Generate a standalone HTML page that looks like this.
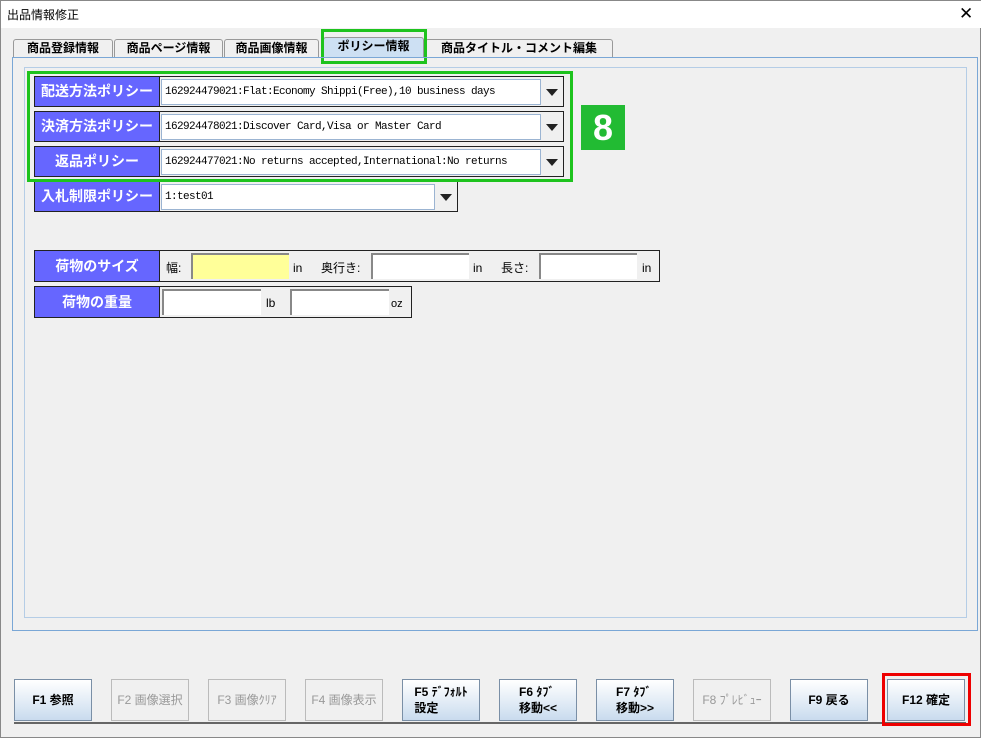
<!DOCTYPE html><html><head><meta charset="utf-8"><style>
*{box-sizing:border-box;margin:0;padding:0}
body{width:981px;height:738px;background:#f0f0f0;font-family:"Liberation Sans","Noto Sans CJK JP",sans-serif;position:relative;overflow:hidden;border:1px solid #888}
.a{position:absolute}
.title{left:0;top:0;width:981px;height:27px;background:#fff;font-size:12px;padding:5px 6px}
.tab{top:38px;height:19px;border:1px solid #999;border-bottom:none;background:#f0f0f0;font-size:12px;font-weight:bold;text-align:center;line-height:17px;border-radius:3px 3px 0 0}
.lbl{background:#6666ff;color:#fff;font-size:14px;font-weight:bold;text-align:center;border:1px solid #222;}
.row{border:1px solid #222;background:#f0f0f0}
.cb{background:#fff;border:1px solid #9bb4d2;font-family:"Liberation Mono","Noto Sans CJK JP",monospace;font-size:11px;padding-left:3px;line-height:24px;white-space:nowrap;overflow:hidden;letter-spacing:-0.6px}
.arr{width:0;height:0;border-left:6px solid transparent;border-right:6px solid transparent;border-top:7px solid #222}
.in{background:#fff;border-top:2px solid #888;border-left:2px solid #888}
.t{font-size:12px}
.btn{top:678px;height:42px;width:78px;border:1px solid #7a8fa6;background:linear-gradient(#fff,#dfeaf5 60%,#c9dbee);font-size:12px;font-weight:bold;display:flex;align-items:center;justify-content:center;text-align:left;line-height:16px}
.dis{background:#f0f0f0;border-color:#bbb;color:#999;font-weight:normal}
</style></head><body>
<div class="a title">出品情報修正</div>
<div class="a" style="left:958px;top:3px;font-size:17px">✕</div>
<div class="a tab" style="left:12px;width:100px">商品登録情報</div>
<div class="a tab" style="left:113px;width:109px">商品ページ情報</div>
<div class="a tab" style="left:223px;width:95px">商品画像情報</div>
<div class="a tab" style="left:322px;width:101px;background:#cde0f3;top:36px;height:21px">ポリシー情報</div>
<div class="a tab" style="left:424px;width:188px">商品タイトル・コメント編集</div>
<div class="a" style="left:320px;top:28px;width:106px;height:35px;border:3px solid #1ec31e"></div>
<div class="a" style="left:11px;top:56px;width:966px;height:574px;border:1px solid #7aa7d6"></div>
<div class="a" style="left:23px;top:66px;width:943px;height:551px;border:1px solid #b5cde6"></div>

<div class="a row" style="left:33px;top:75px;width:530px;height:31px"></div>
<div class="a lbl" style="left:33px;top:75px;width:126px;height:31px;line-height:29px">配送方法ポリシー</div>
<div class="a cb" style="left:160px;top:78px;width:380px;height:26px">162924479021:Flat:Economy Shippi(Free),10 business days</div>
<div class="a arr" style="left:545px;top:88px"></div>

<div class="a row" style="left:33px;top:110px;width:530px;height:31px"></div>
<div class="a lbl" style="left:33px;top:110px;width:126px;height:31px;line-height:29px">決済方法ポリシー</div>
<div class="a cb" style="left:160px;top:113px;width:380px;height:26px">162924478021:Discover Card,Visa or Master Card</div>
<div class="a arr" style="left:545px;top:123px"></div>

<div class="a row" style="left:33px;top:145px;width:530px;height:31px"></div>
<div class="a lbl" style="left:33px;top:145px;width:126px;height:31px;line-height:29px">返品ポリシー</div>
<div class="a cb" style="left:160px;top:148px;width:380px;height:26px">162924477021:No returns accepted,International:No returns</div>
<div class="a arr" style="left:545px;top:158px"></div>

<div class="a row" style="left:33px;top:180px;width:424px;height:31px"></div>
<div class="a lbl" style="left:33px;top:180px;width:126px;height:31px;line-height:29px">入札制限ポリシー</div>
<div class="a cb" style="left:160px;top:183px;width:274px;height:26px">1:test01</div>
<div class="a arr" style="left:439px;top:193px"></div>

<div class="a" style="left:26px;top:70px;width:546px;height:111px;border:3px solid #1ec31e"></div>
<div class="a" style="left:580px;top:104px;width:44px;height:45px;background:#22bb33;color:#fff;font-size:36px;font-weight:bold;text-align:center;line-height:45px">8</div>

<div class="a row" style="left:33px;top:249px;width:626px;height:32px"></div>
<div class="a lbl" style="left:33px;top:249px;width:126px;height:32px;line-height:30px">荷物のサイズ</div>
<div class="a t" style="left:165px;top:258px">幅:</div>
<div class="a in" style="left:190px;top:252px;width:98px;height:26px;background:#ffff99"></div>
<div class="a t" style="left:292px;top:260px">in</div>
<div class="a t" style="left:320px;top:258px">奥行き:</div>
<div class="a in" style="left:370px;top:252px;width:98px;height:26px"></div>
<div class="a t" style="left:472px;top:260px">in</div>
<div class="a t" style="left:500px;top:258px">長さ:</div>
<div class="a in" style="left:538px;top:252px;width:98px;height:26px"></div>
<div class="a t" style="left:641px;top:260px">in</div>

<div class="a row" style="left:33px;top:285px;width:378px;height:32px"></div>
<div class="a lbl" style="left:33px;top:285px;width:126px;height:32px;line-height:30px">荷物の重量</div>
<div class="a in" style="left:161px;top:288px;width:99px;height:26px"></div>
<div class="a t" style="left:265px;top:295px">lb</div>
<div class="a in" style="left:289px;top:288px;width:99px;height:26px"></div>
<div class="a t" style="left:390px;top:297px;font-size:11px">oz</div>

<div class="a btn" style="left:13px">F1 参照</div>
<div class="a btn dis" style="left:110px">F2 画像選択</div>
<div class="a btn dis" style="left:207px">F3 画像ｸﾘｱ</div>
<div class="a btn dis" style="left:304px">F4 画像表示</div>
<div class="a btn" style="left:401px">F5 ﾃﾞﾌｫﾙﾄ<br>設定</div>
<div class="a btn" style="left:498px">F6 ﾀﾌﾞ<br>移動&lt;&lt;</div>
<div class="a btn" style="left:595px">F7 ﾀﾌﾞ<br>移動&gt;&gt;</div>
<div class="a btn dis" style="left:692px">F8 ﾌﾟﾚﾋﾞｭｰ</div>
<div class="a btn" style="left:789px">F9 戻る</div>
<div class="a btn" style="left:886px">F12 確定</div>
<div class="a" style="left:13px;top:721px;width:952px;height:2px;background:#666"></div>
<div class="a" style="left:881px;top:672px;width:89px;height:53px;border:3px solid #e00"></div>
</body></html>
